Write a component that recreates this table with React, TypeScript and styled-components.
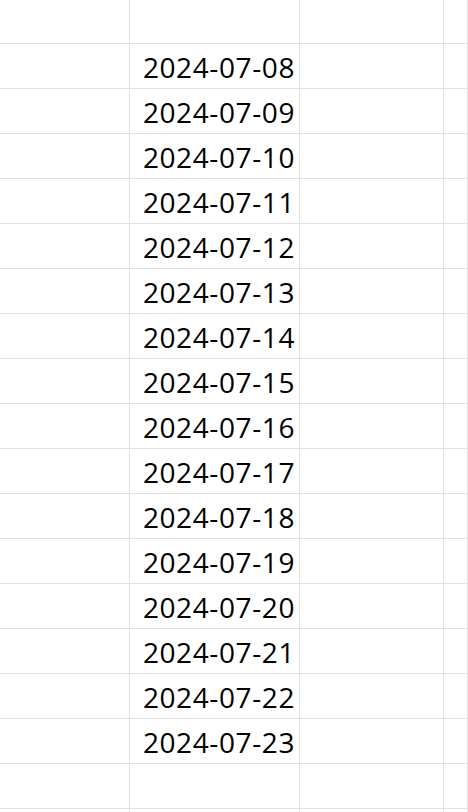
import React from 'react'
import styled, { createGlobalStyle } from 'styled-components'

const GlobalStyle = createGlobalStyle`
  html, body {
    margin: 0;
    padding: 0;
    background: #ffffff;
    overflow: hidden;
  }
  body {
    font-family: "Open Sans", "Noto Sans", sans-serif;
  }
`

const Sheet = styled.div`
  display: grid;
  grid-template-columns: 130px 170px 144px 1fr;
  width: 468px;
  height: 812px;
  overflow: hidden;
`

const Cell = styled.div<{ $first?: boolean }>`
  box-sizing: border-box;
  height: ${(p) => (p.$first ? 44 : 45)}px;
  border-right: 1px solid #e1e1e1;
  border-bottom: 1px solid #e1e1e1;
  display: flex;
  align-items: center;
  justify-content: flex-end;
  padding: 1px 4px 0 0;
  font-size: 28px;
  letter-spacing: 0.6px;
  color: #000000;
  white-space: nowrap;
`

const dates = Array.from({ length: 16 }, (_, i) => `2024-07-${String(8 + i).padStart(2, '0')}`)

const rows: string[] = ['', ...dates, '', '']

const App = () => (
  <>
    <GlobalStyle />
    <Sheet>
      {rows.map((d, r) => (
        <React.Fragment key={r}>
          <Cell $first={r === 0} />
          <Cell $first={r === 0}>{d}</Cell>
          <Cell $first={r === 0} />
          <Cell $first={r === 0} />
        </React.Fragment>
      ))}
    </Sheet>
  </>
)

export default App
